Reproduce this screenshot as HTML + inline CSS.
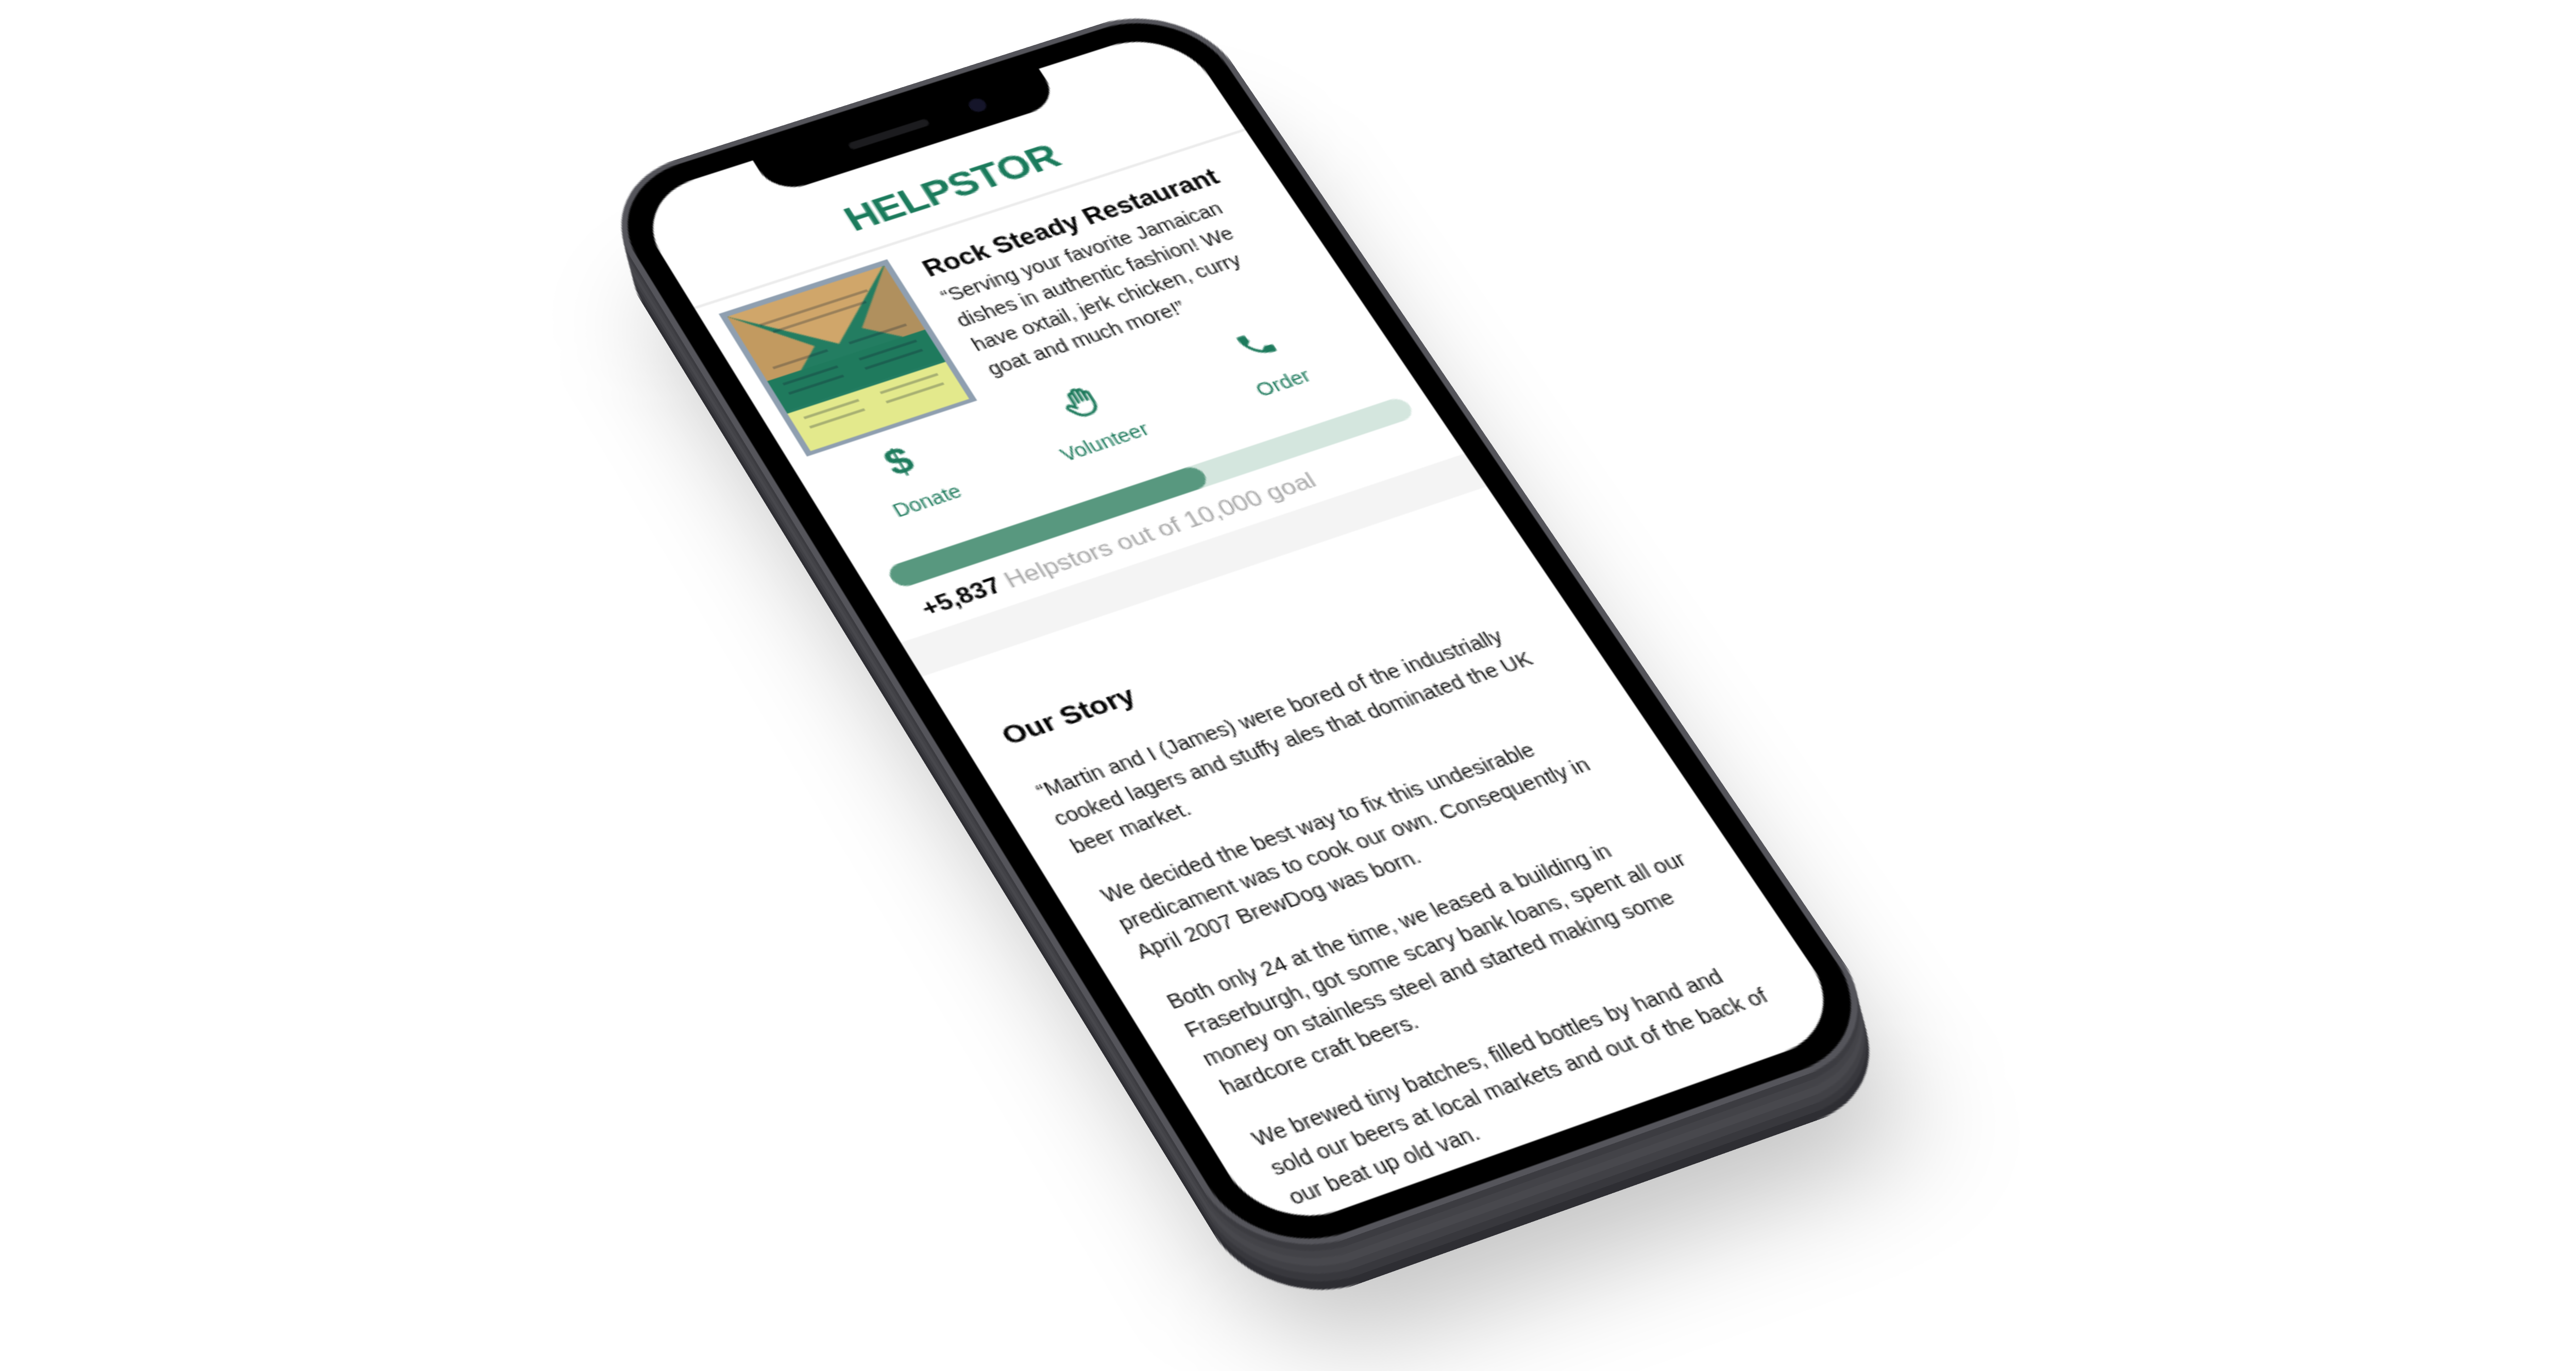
<!DOCTYPE html>
<html><head><meta charset="utf-8">
<style>
html,body{margin:0;padding:0;}
body{width:5001px;height:2643px;overflow:hidden;background:#fff;position:relative;font-family:"Liberation Sans",sans-serif;}
.L{position:absolute;left:0;top:0;width:0;height:0;transform-origin:0 0;}
.rect{position:absolute;}
.scr{position:absolute;left:0;top:0;width:390px;height:844px;background:#fff;border-radius:47px;overflow:hidden;}
.scr div{position:absolute;}
.g{color:#1d7a5c;}
</style></head><body>

<!-- shadow -->
<div class="L" style="transform:translate(80px,200px) matrix3d(2.8115,-0.8697,0,0.00003994,1.21955,2.13791,0,-0.00010153,0,0,1,0,1219,389,0,1);">
  <div class="rect" style="left:-17px;top:-17px;width:424px;height:878px;border-radius:62px;background:rgba(0,0,0,0.22);filter:blur(35px);"></div>
</div>

<!-- extrusion -->
<div class="L" style="transform:translate(22px,88px) matrix3d(2.8115,-0.8697,0,0.00003994,1.21955,2.13791,0,-0.00010153,0,0,1,0,1219,389,0,1);"><div class="rect" style="left:-19px;top:-19px;width:428px;height:882px;border-radius:63px;background:#2e2e33;"></div></div>
<div class="L" style="transform:translate(18px,72px) matrix3d(2.8115,-0.8697,0,0.00003994,1.21955,2.13791,0,-0.00010153,0,0,1,0,1219,389,0,1);"><div class="rect" style="left:-19px;top:-19px;width:428px;height:882px;border-radius:63px;background:#38383d;"></div></div>
<div class="L" style="transform:translate(14px,57px) matrix3d(2.8115,-0.8697,0,0.00003994,1.21955,2.13791,0,-0.00010153,0,0,1,0,1219,389,0,1);"><div class="rect" style="left:-19px;top:-19px;width:428px;height:882px;border-radius:63px;background:#414146;"></div></div>
<div class="L" style="transform:translate(10px,42px) matrix3d(2.8115,-0.8697,0,0.00003994,1.21955,2.13791,0,-0.00010153,0,0,1,0,1219,389,0,1);"><div class="rect" style="left:-19px;top:-19px;width:428px;height:882px;border-radius:63px;background:#48484d;"></div></div>
<div class="L" style="transform:translate(6px,27px) matrix3d(2.8115,-0.8697,0,0.00003994,1.21955,2.13791,0,-0.00010153,0,0,1,0,1219,389,0,1);"><div class="rect" style="left:-19px;top:-19px;width:428px;height:882px;border-radius:63px;background:#434348;"></div></div>
<div class="L" style="transform:translate(3px,13px) matrix3d(2.8115,-0.8697,0,0.00003994,1.21955,2.13791,0,-0.00010153,0,0,1,0,1219,389,0,1);"><div class="rect" style="left:-19px;top:-19px;width:428px;height:882px;border-radius:63px;background:#3c3c41;"></div></div>

<!-- front -->
<div class="L" style="transform:matrix3d(2.8115,-0.8697,0,0.00003994,1.21955,2.13791,0,-0.00010153,0,0,1,0,1219,389,0,1);">
  <div class="rect" style="left:-19px;top:-19px;width:428px;height:882px;border-radius:63px;background:#55555b;"></div>
  <div class="rect" style="left:-15px;top:-15px;width:420px;height:874px;border-radius:59px;background:#000;"></div>
  <div class="scr">
    <div style="left:88px;top:-2px;width:204px;height:33px;background:#000;border-radius:0 0 22px 22px;"></div>
    <div style="left:150px;top:10px;width:56px;height:6px;background:#1c1c1f;border-radius:3px;"></div>
    <div style="left:236px;top:7px;width:11px;height:11px;background:#15152a;border-radius:50%;"></div>

    <div style="left:0;top:52px;width:390px;text-align:center;font-size:28px;line-height:32px;font-weight:bold;letter-spacing:-0.5px;color:#1b7b5c;">HELPSTOR</div>
    <div style="left:0;top:94px;width:390px;height:2px;background:#ececec;"></div>

    <div style="left:12px;top:105px;width:118px;height:123px;">
      <svg width="118" height="123" viewBox="0 0 118 123">
        <rect width="118" height="123" fill="#8f9fb0"/>
        <rect x="4" y="4" width="110" height="116" fill="#237d61"/>
        <polygon points="4,4 113,4 59,50" fill="#d0a66a"/>
        <polygon points="4,4 4,80 44,46" fill="#c29a60"/>
        <polygon points="114,4 114,72 78,44" fill="#b0905e"/>
        <rect x="4" y="60" width="110" height="26" fill="#1f7a5d"/>
        <rect x="4" y="88" width="110" height="32" fill="#e3e98c"/>
        <g stroke="#123" stroke-width="0.8" opacity="0.7">
          <line x1="20" y1="18" x2="95" y2="18"/><line x1="25" y1="26" x2="90" y2="26"/>
          <line x1="12" y1="52" x2="50" y2="52"/><line x1="65" y1="52" x2="105" y2="52"/>
          <line x1="12" y1="66" x2="50" y2="66"/><line x1="65" y1="66" x2="105" y2="66"/>
          <line x1="12" y1="74" x2="50" y2="74"/><line x1="65" y1="74" x2="105" y2="74"/>
          <line x1="12" y1="95" x2="50" y2="95"/><line x1="65" y1="95" x2="105" y2="95"/>
          <line x1="12" y1="103" x2="50" y2="103"/><line x1="65" y1="103" x2="105" y2="103"/>
        </g>
      </svg>
    </div>

    <div style="left:148px;top:112px;font-size:18px;line-height:20px;font-weight:bold;color:#000;white-space:nowrap;">Rock Steady Restaurant</div>
    <div style="left:148px;top:136px;font-size:14px;line-height:21px;color:#111;white-space:nowrap;">“Serving your favorite Jamaican<br>dishes in authentic fashion! We<br>have oxtail, jerk chicken, curry<br>goat and much more!”</div>

    <div class="g" style="left:51px;top:238px;width:24px;text-align:center;font-size:28px;font-weight:bold;line-height:30px;">$</div>
    <div class="g" style="left:25px;top:279px;width:80px;text-align:center;font-size:14px;line-height:16px;">Donate</div>

    <div style="left:176px;top:240px;width:26px;height:26px;">
      <svg width="26" height="26" viewBox="0 0 24 24" fill="none" stroke="#1d7a5c" stroke-width="1.9" stroke-linecap="round" stroke-linejoin="round">
        <path d="M8 13V6a1.4 1.4 0 0 1 2.8 0v6M10.8 11.5V4.2a1.4 1.4 0 0 1 2.8 0v7.3M13.6 11.5V5.2a1.4 1.4 0 0 1 2.8 0v6.8M16.4 12V8a1.4 1.4 0 0 1 2.8 0v7c0 4-3 7-6.5 7h-1.2c-2.3 0-3.8-1-5.2-2.8L3.2 14.8a1.5 1.5 0 0 1 2.3-1.9L8 15.3"/>
      </svg>
    </div>
    <div class="g" style="left:148px;top:279px;width:80px;text-align:center;font-size:14px;line-height:16px;">Volunteer</div>

    <div style="left:300px;top:241px;width:25px;height:25px;">
      <svg width="25" height="25" viewBox="0 0 24 24"><path fill="#1d7a5c" d="M6.62 10.79c1.44 2.83 3.76 5.14 6.590 6.59l2.2-2.2c.27-.27.67-.36 1.02-.24 1.12.37 2.33.57 3.57.57.55 0 1 .45 1 1V20c0 .55-.45 1-1 1-9.39 0-17-7.61-17-17 0-.55.45-1 1-1h3.5c.55 0 1 .45 1 1 0 1.25.2 2.45.57 3.57.11.35.03.74-.25 1.02l-2.2 2.2z"/></svg>
    </div>
    <div class="g" style="left:273px;top:279px;width:80px;text-align:center;font-size:14px;line-height:16px;">Order</div>

    <div style="left:17px;top:324px;width:360px;height:18px;border-radius:9px;background:#d4e6de;"></div>
    <div style="left:17px;top:324px;width:216px;height:18px;border-radius:9px;background:#58987f;"></div>

    <div style="left:0;top:379px;width:390px;height:28px;background:#f4f4f4;"></div>
    <div style="left:24px;top:352px;font-size:17px;line-height:20px;white-space:nowrap;"><b style="color:#000;">+5,837</b> <span style="color:#a8a8a8;">Helpstors out of 10,000 goal</span></div>

    <div style="left:25px;top:457px;font-size:19px;line-height:22px;font-weight:bold;color:#000;">Our Story</div>
    <div style="left:25px;top:500px;font-size:14px;line-height:22px;color:#111;white-space:nowrap;">
      “Martin and I (James) were bored of the industrially<br>cooked lagers and stuffy ales that dominated the UK<br>beer market.
      <div style="position:static;height:17px;"></div>
      We decided the best way to fix this undesirable<br>predicament was to cook our own. Consequently in<br>April 2007 BrewDog was born.
      <div style="position:static;height:17px;"></div>
      Both only 24 at the time, we leased a building in<br>Fraserburgh, got some scary bank loans, spent all our<br>money on stainless steel and started making some<br>hardcore craft beers.
      <div style="position:static;height:17px;"></div>
      We brewed tiny batches, filled bottles by hand and<br>sold our beers at local markets and out of the back of<br>our beat up old van.
    </div>
  </div>
</div>
</body></html>
